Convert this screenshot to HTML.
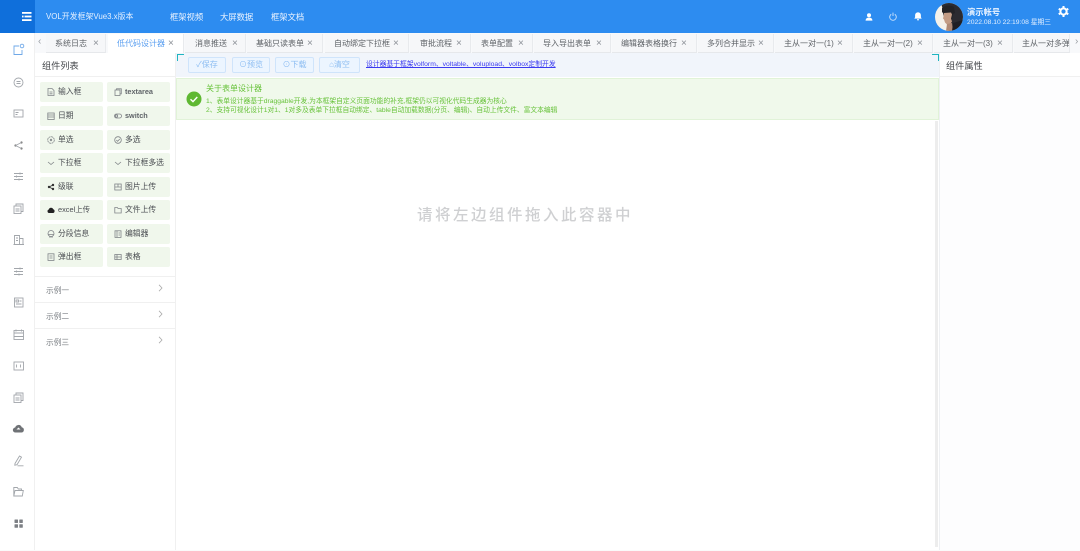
<!DOCTYPE html>
<html lang="zh"><head><meta charset="utf-8"><title>VOL</title>
<style>
html,body{margin:0;padding:0;width:1080px;height:551px;overflow:hidden;background:#fff}
body{font-family:"Liberation Sans","Noto Sans CJK SC",sans-serif;position:relative;color:#606266}
#w{position:absolute;left:0;top:0;width:1080px;height:551px;overflow:hidden;filter:blur(.35px)}
.a{position:absolute;white-space:nowrap}
.b{position:absolute}
.t{position:absolute;top:34px;height:19px;background:#f6f7f9;border-right:1px solid #e8eaed;border-bottom:1px solid #e6e8eb;box-sizing:border-box;font-size:8px;line-height:19px;color:#5f6368;white-space:nowrap;overflow:hidden}
.t span{position:absolute;left:9px;top:0}
.t i{position:absolute;top:0;font-style:normal;font-size:10px;color:#8a8f96}
.c{position:absolute;width:63px;height:19.5px;background:#f0f7ec;border-radius:2px;font-size:7.800px;line-height:19px;color:#4a4d52;white-space:nowrap}
.c svg{position:absolute;left:7px;top:5.500px;width:8px;height:8px;fill:none;stroke:#808488;stroke-width:.8}
.c span{position:absolute;left:18px;top:0}
.c span.e{font-size:7.300px;font-weight:bold;color:#5f6368}
.n{position:absolute;left:12px;width:13px;height:13px;fill:none;stroke:#a2a6ab;stroke-width:.9}
.btn{position:absolute;top:57px;height:16px;background:#ecf5ff;border:1px solid #cfe4fb;border-radius:2px;box-sizing:border-box;font-size:8px;line-height:14px;text-align:center;color:#8dbdf2}
.s{position:absolute;left:46px;font-size:7.700px;color:#7c8085;white-space:nowrap}
.l{position:absolute;left:35px;width:140px;height:1px;background:#f0f0f0}
</style></head><body><div id="w">

<div class="b" style="left:0;top:0;width:1080px;height:33px;background:#2d8cf0"></div>
<div class="b" style="left:0;top:0;width:35px;height:33px;background:#0f6fdb"></div>
<svg class="b" style="left:22px;top:12px;width:10px;height:9px" viewBox="0 0 10 9" fill="#fff"><rect x="0" y="0" width="9.500" height="1.800"/><rect x="2.500" y="3.600" width="7" height="1.800"/><rect x="0" y="7.200" width="9.500" height="1.800"/><rect x="0" y="3.600" width="1.600" height="1.800"/></svg>
<div class="a" style="left:46px;top:11px;font-size:7.900px;color:#e3efff;line-height:12px">VOL开发框架Vue3.x版本</div>
<div class="a" style="left:170px;top:11px;font-size:8.300px;color:#eef5ff;line-height:12px">框架视频</div>
<div class="a" style="left:220px;top:11px;font-size:8.300px;color:#eef5ff;line-height:12px">大屏数据</div>
<div class="a" style="left:271px;top:11px;font-size:8.300px;color:#eef5ff;line-height:12px">框架文档</div>

<svg class="b" style="left:865px;top:13px;width:8px;height:8px" viewBox="0 0 8 8" fill="#fff"><circle cx="4" cy="2.200" r="2"/><path d="M.6 7.600c0-2.200 1.500-3 3.400-3s3.400.8 3.400 3z"/></svg>
<svg class="b" style="left:889px;top:12px;width:8px;height:9px" viewBox="0 0 8 9" fill="none" stroke="#cfe4fb" stroke-width=".9"><path d="M2.200 2.200a3.300 3.300 0 1 0 3.600 0M4 .6v3.400"/></svg>
<svg class="b" style="left:914px;top:12px;width:8px;height:9px" viewBox="0 0 8 9" fill="#fff"><path d="M4 .4c-1.900 0-2.900 1.300-2.900 3v1.800L.3 6.600h7.400l-.8-1.400V3.400c0-1.700-1-3-2.900-3z"/><rect x="3" y="7.100" width="2" height="1.300" rx=".6"/></svg>

<svg class="b" style="left:935px;top:3px;width:28px;height:28px" viewBox="0 0 28 28"><defs><clipPath id="av"><circle cx="14" cy="14" r="14"/></clipPath></defs><g clip-path="url(#av)"><rect width="28" height="28" fill="#f4f1ea"/><path d="M6 0h22v28H14z" fill="#2b2b30"/><path d="M7 5c3-3 9-3 12-1l1 6-2 1-1 6-5 1-3-3-1-5-1-1z" fill="#232326"/><path d="M9 10l7-.5 1 2-1 4 1 3-2 3-3 0-2-2-1-3-1-1 .5-2z" fill="#c39c84"/><path d="M12 21l5-1 1 8h-7z" fill="#b08a74"/><path d="M18 20l10-3v11H17z" fill="#1f1f24"/></g></svg>
<div class="a" style="left:967px;top:7px;font-size:8.300px;font-weight:bold;color:#eaf3ff;line-height:11px">演示帐号</div>
<div class="a" style="left:967px;top:18px;font-size:6.750px;color:#e3efff;line-height:10px">2022.08.10 22:19:08 星期三</div>
<svg class="b" style="left:1058px;top:6px;width:11px;height:11px" viewBox="0 0 12 12"><circle cx="6" cy="6" r="3.400" fill="none" stroke="#fff" stroke-width="2.200"/><g stroke="#fff" stroke-width="2.200"><path d="M6 0v2.500M6 9.500V12M.8 3l2.200 1.300M9 7.700l2.200 1.300M.8 9l2.200-1.300M9 4.300L11.200 3"/></g></svg>

<div class="b" style="left:35px;top:33px;width:1045px;height:20px;background:#f8f9fb"></div>
<div class="a" style="left:38px;top:36px;font-size:10px;color:#9a9ea4">‹</div>
<div class="a" style="left:1075px;top:36px;font-size:10px;color:#9a9ea4">›</div>
<div class="t" style="left:46px;width:60px"><span>系统日志</span><i style="left:47px">×</i></div>
<div class="t" style="left:108px;width:76px;background:#fff;color:#5b9ff0;border-bottom:0"><span>低代码设计器</span><i style="left:60px">×</i></div>
<div class="t" style="left:185px;width:61px"><span style="left:10px">消息推送</span><i style="left:47px">×</i></div>
<div class="t" style="left:247px;width:76px"><span>基础只读表单</span><i style="left:60px">×</i></div>
<div class="t" style="left:325px;width:84px"><span>自动绑定下拉框</span><i style="left:68px">×</i></div>
<div class="t" style="left:410px;width:61px"><span style="left:10px">审批流程</span><i style="left:46px">×</i></div>
<div class="t" style="left:472px;width:61px"><span>表单配置</span><i style="left:46px">×</i></div>
<div class="t" style="left:534px;width:77px"><span>导入导出表单</span><i style="left:62px">×</i></div>
<div class="t" style="left:612px;width:85px"><span>编辑器表格换行</span><i style="left:69px">×</i></div>
<div class="t" style="left:698px;width:76px"><span>多列合并显示</span><i style="left:60px">×</i></div>
<div class="t" style="left:775px;width:78px"><span>主从一对一(1)</span><i style="left:62px">×</i></div>
<div class="t" style="left:854px;width:79px"><span>主从一对一(2)</span><i style="left:63px">×</i></div>
<div class="t" style="left:934px;width:79px"><span>主从一对一(3)</span><i style="left:63px">×</i></div>
<div class="t" style="left:1014px;width:56px"><span style="left:8px">主从一对多弹</span></div>

<div class="b" style="left:0;top:33px;width:35px;height:518px;background:#fff;border-right:1px solid #f0f0f0;box-sizing:border-box"></div>
<svg class="n" style="top:43px" viewBox="0 0 13 13" stroke="#6fa8e8"><path d="M7 3H2v8.500h8V7" style="stroke:#6fa8e8"/><circle cx="10" cy="3" r="1.800" style="stroke:#6fa8e8"/></svg>
<svg class="n" style="top:75.500px" viewBox="0 0 13 13"><circle cx="6.500" cy="6.500" r="4.500"/><path d="M4.500 5.500h4M4.500 7.500h4"/></svg>
<svg class="n" style="top:107px" viewBox="0 0 13 13"><rect x="2" y="3" width="9" height="7"/><path d="M3.500 5.500h3M3.500 7.500h2"/></svg>
<svg class="n" style="top:138.500px" viewBox="0 0 13 13"><circle cx="3.500" cy="6.500" r="1.100" fill="#777" stroke="none"/><circle cx="9.500" cy="3.500" r="1.100" fill="#777" stroke="none"/><circle cx="9.500" cy="9.500" r="1.100" fill="#777" stroke="none"/><path d="M3.500 6.500l6-3M3.500 6.500l6 3"/></svg>
<svg class="n" style="top:170px" viewBox="0 0 13 13"><path d="M2 3.500h9M2 6.500h9M2 9.500h9M8 2.500v2M4.500 5.500v2M7 8.500v2"/></svg>
<svg class="n" style="top:201.500px" viewBox="0 0 13 13"><rect x="2" y="4" width="7" height="7.500"/><path d="M4 4V2h7v7.500H9M3.500 7h4M3.500 9h4"/></svg>
<svg class="n" style="top:233px" viewBox="0 0 13 13"><path d="M2.500 11.500V2.500h5v9M7.500 5.500h3.500v6M1.500 11.500h10.500M4 5h2M4 7.500h2"/></svg>
<svg class="n" style="top:264.500px" viewBox="0 0 13 13"><path d="M2 3.500h9M2 6.500h9M2 9.500h9M8 2.500v2M4.500 5.500v2M7 8.500v2"/></svg>
<svg class="n" style="top:296px" viewBox="0 0 13 13"><rect x="2.500" y="2" width="8.500" height="9"/><rect x="4" y="4" width="2.500" height="2"/><path d="M4 8h5.500M7.500 5h2"/></svg>
<svg class="n" style="top:327.500px" viewBox="0 0 13 13"><rect x="2" y="2.500" width="9.500" height="9"/><path d="M2 5h9.500M2 8.500h9.500M4 1.500v2M9.500 1.500v2"/></svg>
<svg class="n" style="top:359px" viewBox="0 0 13 13"><rect x="2" y="3" width="9.500" height="8"/><path d="M4.500 5.500v3M8.500 5.500v3"/></svg>
<svg class="n" style="top:390.500px" viewBox="0 0 13 13"><rect x="2" y="4" width="7" height="7.500"/><path d="M4 4V2h7v7.500H9M3.500 7h4M3.500 9h4"/></svg>
<svg class="n" style="top:422px;stroke:none;fill:#6f7276" viewBox="0 0 13 13"><path d="M3.500 10.500a2.500 2.500 0 0 1-.3-5 3.400 3.400 0 0 1 6.500-.3 2.700 2.700 0 0 1 0 5.300z"/><path d="M6.500 5.500l-2 2h4z" fill="#fff"/></svg>
<svg class="n" style="top:453.500px" viewBox="0 0 13 13"><path d="M3 9.500L7.500 2l2 1.200-4.500 7.500-2.200.5zM5.500 11.800h6"/></svg>
<svg class="n" style="top:485px" viewBox="0 0 13 13"><path d="M1.800 11V2.500h3.500l1 1.500h3.200v1.500M1.800 11h8.500l1-5.500H3z"/></svg>
<svg class="n" style="top:517px;stroke:none;fill:#7d8085" viewBox="0 0 13 13"><rect x="2.500" y="2.500" width="3.500" height="3.500" rx=".5"/><rect x="7.300" y="2.500" width="3.500" height="3.500" rx=".5"/><rect x="2.500" y="7.200" width="3.500" height="3.500" rx=".5"/><rect x="7.300" y="7.200" width="3.500" height="3.500" rx=".5"/></svg>
<div class="b" style="left:17px;top:550px;width:2px;height:1px;background:#aaa"></div>

<div class="b" style="left:175px;top:53px;width:1px;height:498px;background:#f0f0f0"></div>
<div class="a" style="left:42px;top:60px;font-size:9.200px;line-height:12px;color:#44474b">组件列表</div>
<div class="l" style="top:76px"></div>

<div class="c" style="left:40px;top:82px"><svg viewBox="0 0 8 8"><path d="M1 .5h4l2 2v5H1zM2.500 4h3M2.500 5.800h3"/></svg><span>输入框</span></div>
<div class="c" style="left:107px;top:82px"><svg viewBox="0 0 8 8"><rect x="1" y="2" width="5" height="5.500"/><path d="M2.500 2V.8H7.300v5H6"/></svg><span class="e">textarea</span></div>
<div class="c" style="left:40px;top:106px"><svg viewBox="0 0 8 8"><rect x=".8" y="1" width="6.400" height="6.500"/><path d="M.8 3h6.400M.8 5h6.400"/></svg><span>日期</span></div>
<div class="c" style="left:107px;top:106px"><svg viewBox="0 0 8 8"><rect x=".5" y="2" width="7" height="4" rx="2"/><circle cx="2.500" cy="4" r="1.200"/></svg><span class="e">switch</span></div>
<div class="c" style="left:40px;top:130px"><svg viewBox="0 0 8 8"><circle cx="4" cy="4" r="3.300" stroke-dasharray="2 .6"/><circle cx="4" cy="4" r=".8"/></svg><span>单选</span></div>
<div class="c" style="left:107px;top:130px"><svg viewBox="0 0 8 8"><circle cx="4" cy="4" r="3.300"/><path d="M2.300 4l1.300 1.300 2.200-2.300"/></svg><span>多选</span></div>
<div class="c" style="left:40px;top:153px"><svg viewBox="0 0 8 8"><path d="M1 3l3 2.500L7 3"/></svg><span>下拉框</span></div>
<div class="c" style="left:107px;top:153px"><svg viewBox="0 0 8 8"><path d="M1 3l3 2.500L7 3"/></svg><span>下拉框多选</span></div>
<div class="c" style="left:40px;top:177px"><svg viewBox="0 0 8 8" style="stroke:#333"><path d="M2 4l4-2M2 4l4 2"/><circle cx="2" cy="4" r=".8" fill="#333"/><circle cx="6" cy="2" r=".8" fill="#333"/><circle cx="6" cy="6" r=".8" fill="#333"/></svg><span>级联</span></div>
<div class="c" style="left:107px;top:177px"><svg viewBox="0 0 8 8"><rect x=".8" y="1" width="6.400" height="6"/><path d="M.8 4h6.400M4 1v3"/></svg><span>图片上传</span></div>
<div class="c" style="left:40px;top:200px"><svg viewBox="0 0 8 8" style="stroke:none;fill:#222"><path d="M2 7a1.800 1.800 0 0 1-.2-3.500 2.300 2.300 0 0 1 4.400-.2A1.900 1.900 0 0 1 6 7z"/></svg><span style="font-size:7.400px">excel上传</span></div>
<div class="c" style="left:107px;top:200px"><svg viewBox="0 0 8 8"><path d="M.8 7V1.500h2.500l.8 1h3.100V7z"/></svg><span>文件上传</span></div>
<div class="c" style="left:40px;top:224px"><svg viewBox="0 0 8 8"><circle cx="4" cy="3.500" r="3"/><path d="M1 4.500h6M2 7h4"/></svg><span>分段信息</span></div>
<div class="c" style="left:107px;top:224px"><svg viewBox="0 0 8 8"><rect x="1" y=".8" width="6" height="6.600"/><path d="M3 .8v6.600M4.500 3h1.500M4.500 5h1.500"/></svg><span>编辑器</span></div>
<div class="c" style="left:40px;top:247px"><svg viewBox="0 0 8 8"><rect x="1" y=".8" width="6" height="6.600"/><path d="M2.500 3h3M2.500 5h3"/></svg><span>弹出框</span></div>
<div class="c" style="left:107px;top:247px"><svg viewBox="0 0 8 8"><rect x=".8" y="1.500" width="6.400" height="5"/><path d="M.8 4h6.400M3 1.500v5"/></svg><span>表格</span></div>

<div class="l" style="top:276px"></div><div class="l" style="top:302px"></div><div class="l" style="top:328px"></div>
<div class="s" style="top:285px">示例一</div><div class="s" style="top:311px">示例二</div><div class="s" style="top:337px">示例三</div>
<svg class="b" style="left:158px;top:284px;width:5px;height:8px" viewBox="0 0 5 8" fill="none" stroke="#aaa" stroke-width=".8"><path d="M1 .8L4 4 1 7.200"/></svg>
<svg class="b" style="left:158px;top:310px;width:5px;height:8px" viewBox="0 0 5 8" fill="none" stroke="#aaa" stroke-width=".8"><path d="M1 .8L4 4 1 7.200"/></svg>
<svg class="b" style="left:158px;top:336px;width:5px;height:8px" viewBox="0 0 5 8" fill="none" stroke="#aaa" stroke-width=".8"><path d="M1 .8L4 4 1 7.200"/></svg>

<div class="b" style="left:176px;top:53px;width:763px;height:24px;background:#f1f5fb"></div>
<div class="b" style="left:177px;top:54px;width:6px;height:6px;border-left:1px solid #1fb5c0;border-top:1px solid #1fb5c0"></div>
<div class="b" style="left:932px;top:54px;width:6px;height:6px;border-right:1px solid #1fb5c0;border-top:1px solid #1fb5c0"></div>
<div class="btn" style="left:188px;width:38px">✓保存</div>
<div class="btn" style="left:232px;width:38px">⊙预览</div>
<div class="btn" style="left:275px;width:39px">⊙下载</div>
<div class="btn" style="left:319px;width:41px">⌂清空</div>
<div class="a" style="left:366px;top:60px;font-size:6.800px;line-height:10px;color:#3a3af0;text-decoration:underline">设计器基于框架volform、voltable、volupload、volbox定制开发</div>

<div class="b" style="left:176px;top:78px;width:763px;height:42px;background:#f0f9eb;border:1px solid #e1f3d8;box-sizing:border-box"></div>
<svg class="b" style="left:186px;top:91px;width:16px;height:16px" viewBox="0 0 16 16"><circle cx="8" cy="8" r="7.500" fill="#5fb832"/><path d="M4.500 8.200l2.500 2.400 4.300-4.600" fill="none" stroke="#fff" stroke-width="1.400"/></svg>
<div class="a" style="left:206px;top:84px;font-size:8px;line-height:10px;color:#67c23a">关于表单设计器</div>
<div class="a" style="left:206px;top:97px;font-size:6.750px;line-height:10px;color:#67c23a">1、表单设计器基于draggable开发,为本框架自定义页面功能的补充,框架仍以可视化代码生成器为核心</div>
<div class="a" style="left:206px;top:106px;font-size:6.750px;line-height:10px;color:#67c23a">2、支持可视化设计1对1、1对多及表单下拉框自动绑定、table自动加载数据(分页、编辑)、自动上传文件、富文本编辑</div>

<div class="a" style="left:417px;top:207px;font-size:15.500px;letter-spacing:2.500px;line-height:18px;font-weight:500;color:#cfd0d2">请将左边组件拖入此容器中</div>
<div class="b" style="left:935px;top:121px;width:3px;height:426px;background:#ededed"></div>

<div class="b" style="left:939px;top:53px;width:1px;height:498px;background:#eef0f3"></div>
<div class="a" style="left:946px;top:60px;font-size:9.200px;line-height:12px;color:#44474b">组件属性</div>
<div class="b" style="left:940px;top:76px;width:140px;height:1px;background:#f0f0f0"></div>
<div class="b" style="left:940px;top:77px;width:140px;height:474px;background:#fdfdfe"></div>
<div class="b" style="left:0;top:550px;width:1080px;height:1px;background:#fafafa"></div>
</div></body></html>
